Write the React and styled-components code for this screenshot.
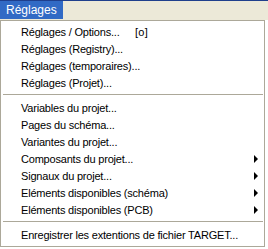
import React from "react";
import styled, { createGlobalStyle } from "styled-components";

const GlobalStyle = createGlobalStyle`
  body {
    margin: 0;
    background: #ffffff;
    font-family: "Liberation Sans", Arial, sans-serif;
    font-size: 11px;
  }
`;

const Screen = styled.div`
  width: 268px;
  height: 249px;
  overflow: hidden;
  background: #ffffff;
`;

const MenuBar = styled.div`
  display: flex;
  height: 19px;
  border-top: 1px solid #1f3f8c;
  background: #ece9d8;
`;

const MenuTitle = styled.div`
  display: flex;
  align-items: center;
  height: 18px;
  padding: 0 6px;
  color: ${(p) => (p.$active ? "#ffffff" : "#000000")};
  background: ${(p) => (p.$active ? "#316ac5" : "transparent")};
  font-size: 12px;
`;

const Dropdown = styled.div`
  width: 263px;
  border: 1px solid #aca899;
  background: #ffffff;
  padding: 2px 0 3px;
`;

const Item = styled.div`
  display: flex;
  align-items: center;
  height: 17px;
  padding: 0 6px 0 20px;
  color: #000000;
  letter-spacing: -0.2px;
  white-space: nowrap;
`;

const Label = styled.span`
  min-width: 113px;
`;

const Shortcut = styled.span`
  margin-left: 1px;
  letter-spacing: 0.3px;
`;

const Arrow = styled.span`
  margin-left: auto;
  width: 0;
  height: 0;
  border-left: 4px solid #000000;
  border-top: 4px solid transparent;
  border-bottom: 4px solid transparent;
`;

const Separator = styled.div`
  height: 1px;
  margin: 3px 1px 4px 2px;
  background: #aca899;
`;

const groups = [
  [
    { label: "Réglages / Options...", shortcut: "[o]" },
    { label: "Réglages (Registry)..." },
    { label: "Réglages (temporaires)..." },
    { label: "Réglages (Projet)..." },
  ],
  [
    { label: "Variables du projet..." },
    { label: "Pages du schéma..." },
    { label: "Variantes du projet..." },
    { label: "Composants du projet...", sub: true },
    { label: "Signaux du projet...", sub: true },
    { label: "Eléments disponibles (schéma)", sub: true },
    { label: "Eléments disponibles (PCB)", sub: true },
  ],
  [{ label: "Enregistrer les extentions de fichier TARGET..." }],
];

export default function App() {
  return (
    <Screen>
      <GlobalStyle />
      <MenuBar>
        <MenuTitle $active>Réglages</MenuTitle>
      </MenuBar>
      <Dropdown>
        {groups.map((group, gi) => (
          <React.Fragment key={gi}>
            {gi > 0 && <Separator />}
            {group.map((it) => (
              <Item key={it.label}>
                <Label>{it.label}</Label>
                {it.shortcut && <Shortcut>{it.shortcut}</Shortcut>}
                {it.sub && <Arrow />}
              </Item>
            ))}
          </React.Fragment>
        ))}
      </Dropdown>
    </Screen>
  );
}
